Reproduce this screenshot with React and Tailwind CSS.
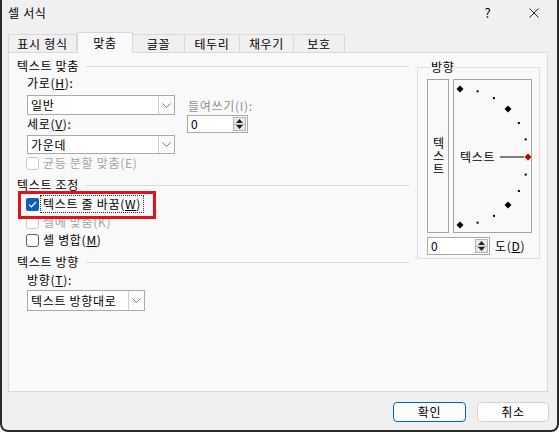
import React from 'react';

const Chevron = () => (
  <svg width="9" height="5" viewBox="0 0 9 5">
    <path d="M0.5 0.5 L4.5 4.5 L8.5 0.5" fill="none" stroke="#7a7a7a" strokeWidth="1" />
  </svg>
);

function Select({ value, className }) {
  return (
    <div className={`flex bg-white border border-[#a9a9a9] ${className}`}>
      <div className="flex-1 pl-[3px] flex items-center leading-[16px] text-black">{value}</div>
      <div className="w-[16px] border-l border-[#cfcfcf] bg-[#fbfbfb] flex items-center justify-center">
        <Chevron />
      </div>
    </div>
  );
}

function SpinBox({ value, className }) {
  return (
    <div className={`flex bg-white border border-[#a9a9a9] ${className}`}>
      <div className="flex-1 pl-[3px] flex items-center leading-[16px]">{value}</div>
      <div className="w-[13px] my-[1px] mr-[1px] flex flex-col border border-[#b4b4b4] bg-[#e9e9e9]">
        <div className="flex-1 flex items-center justify-center border-b border-[#b4b4b4]">
          <svg width="7" height="4" viewBox="0 0 7 4"><path d="M3.5 0 L7 4 L0 4 Z" fill="#222" /></svg>
        </div>
        <div className="flex-1 flex items-center justify-center">
          <svg width="7" height="4" viewBox="0 0 7 4"><path d="M0 0 L7 0 L3.5 4 Z" fill="#222" /></svg>
        </div>
      </div>
    </div>
  );
}

function Checkbox({ checked, disabled }) {
  if (checked) {
    return (
      <div className="w-[13px] h-[13px] rounded-[2px] bg-[#0f5fb8] flex items-center justify-center">
        <svg width="9" height="7" viewBox="0 0 9 7">
          <path d="M1 3.6 L3.4 6 L8 1" fill="none" stroke="#fff" strokeWidth="1.2" />
        </svg>
      </div>
    );
  }
  return (
    <div
      className={`w-[13px] h-[13px] rounded-[3px] bg-white border ${disabled ? 'border-[#cbcbcb]' : 'border-[#5c5c5c]'}`}
    />
  );
}

function GroupHeader({ children, className }) {
  return (
    <div className={`flex items-center h-[16px] ${className}`}>
      <span className="leading-[16px]">{children}</span>
      <div className="flex-1 h-px bg-[#dcdcdc] ml-[7px]" />
    </div>
  );
}

function Tab({ label, active, className }) {
  if (active) {
    return (
      <div className={`relative z-10 h-[21px] flex items-center justify-center bg-[#f9f9f9] border-x border-t border-[#d9d9d9] ${className}`}>
        {label}
      </div>
    );
  }
  return (
    <div className={`mt-[2px] h-[19px] flex items-center justify-center bg-[#f0f0f0] border-t border-r border-[#d9d9d9] ${className}`}>
      {label}
    </div>
  );
}

const angles = [75, 60, 30, 15, -15, -30, -60, -75];

function Dial() {
  const cx = 6;
  const cy = 77;
  const r = 68;
  const diamond = (x, y, s, fill) => (
    <path key={`${x}-${y}`} d={`M${x} ${y - s} L${x + s} ${y} L${x} ${y + s} L${x - s} ${y} Z`} fill={fill} />
  );
  return (
    <svg width="77" height="152" viewBox="0 0 77 152">
      {diamond(cx, cy - r, 3.5, '#000')}
      {diamond(cx + 48, cy - 48, 3.5, '#000')}
      {diamond(cx + 48, cy + 48, 3.5, '#000')}
      {diamond(cx, cy + r, 3.5, '#000')}
      {diamond(cx + r, cy, 3.5, '#c00000')}
      {angles.map((a) => {
        const rad = (a * Math.PI) / 180;
        const x = cx + r * Math.cos(rad);
        const y = cy - r * Math.sin(rad);
        return <rect key={a} x={x - 1} y={y - 1} width="2" height="2" fill="#000" />;
      })}
      <line x1="46" y1={cy} x2="70" y2={cy} stroke="#000" strokeWidth="1" />
      <text x="6" y={cy + 4.5} fontSize="12" letterSpacing="0.7" fontFamily="'Noto Sans CJK KR', sans-serif" fill="#000">
        텍스트
      </text>
    </svg>
  );
}

export default function App() {
  return (
    <div className="w-[559px] h-[432px] bg-[#f0f0f0] border-x-2 border-b-2 border-[#2a2a2a] rounded-b-[8px] flex flex-col text-[12px] tracking-[0.7px] text-black font-['Noto_Sans_CJK_KR',sans-serif] leading-[16px] overflow-hidden">
      {/* Title bar */}
      <div className="h-[26px] flex items-center pl-[6px]">
        <span className="flex-1">셀 서식</span>
        <div className="w-[46px] flex justify-center text-[13px]">?</div>
        <div className="w-[46px] flex justify-center">
          <svg width="10" height="10" viewBox="0 0 10 10">
            <path d="M0.5 0.5 L9.5 9.5 M9.5 0.5 L0.5 9.5" stroke="#222" strokeWidth="1" />
          </svg>
        </div>
      </div>

      {/* Tabs */}
      <div className="mt-[6px] ml-[6px] flex -mb-px">
        <Tab label="표시 형식" className="w-[69px] border-l" />
        <Tab label="맞춤" active className="w-[56px]" />
        <Tab label="글꼴" className="w-[52px]" />
        <Tab label="테두리" className="w-[55px]" />
        <Tab label="채우기" className="w-[54px]" />
        <Tab label="보호" className="w-[51px]" />
      </div>

      {/* Panel */}
      <div className="ml-[6px] w-[540px] h-[340px] bg-[#f9f9f9] border border-[#d9d9d9] flex">
        {/* Left column */}
        <div className="w-[400px] pl-[8px] flex flex-col">
          <GroupHeader className="mt-[5px]">텍스트 맞춤</GroupHeader>
          <div className="pl-[10px] flex flex-col">
            <div className="flex">
              <div className="w-[148px] flex flex-col">
                <div className="mt-[1px] h-[16px]">가로(<u>H</u>):</div>
                <Select value="일반" className="mt-[4px] h-[20px]" />
                <div className="mt-[1px] h-[16px]">세로(<u>V</u>):</div>
                <Select value="가운데" className="mt-[3px] h-[19px]" />
              </div>
              <div className="ml-[12px] flex flex-col">
                <div className="mt-[24px] h-[16px] text-[#8f8f8f] pl-[1px]">들여쓰기(I):</div>
                <SpinBox value="0" className="mt-[1px] h-[18px] w-[61px]" />
              </div>
            </div>
            <div className="mt-[1px] h-[16px] flex items-center gap-[4px] -ml-[1px] text-[#a3a3a3]">
              <Checkbox disabled />
              <span>균등 분할 맞춤(E)</span>
            </div>
          </div>

          <GroupHeader className="mt-[6px]">텍스트 조정</GroupHeader>
          <div className="pl-[10px] flex flex-col">
            <div className="relative mt-[2px] h-[18px] flex items-center -ml-[1px]">
              <Checkbox checked />
              <span className="ml-[1px] px-[2px] border border-dotted border-[#333] leading-[16px]">
                텍스트 줄 바꿈(<u>W</u>)
              </span>
              <div className="absolute -left-[8px] -top-[4px] w-[138px] h-[28px] border-[3px] border-[#e0121c] pointer-events-none" />
            </div>
            <div className="h-[18px] flex items-center gap-[4px] -ml-[1px] text-[#a3a3a3]">
              <Checkbox disabled />
              <span>셀에 맞춤(K)</span>
            </div>
            <div className="h-[18px] flex items-center gap-[4px] -ml-[1px]">
              <Checkbox />
              <span>셀 병합(<u>M</u>)</span>
            </div>
          </div>

          <GroupHeader className="mt-[5px]">텍스트 방향</GroupHeader>
          <div className="pl-[10px] flex flex-col">
            <div className="mt-[2px] h-[16px]">방향(<u>T</u>):</div>
            <Select value="텍스트 방향대로" className="mt-[2px] h-[21px] w-[118px]" />
          </div>
        </div>

        {/* Right column */}
        <fieldset className="ml-[8px] mt-[6px] w-[123px] self-start border border-[#dcdcdc] pl-[9px] pb-[3px]">
          <legend className="ml-[3px] px-[1px] leading-[16px]">방향</legend>
          <div className="mt-[4px] flex gap-[4px]">
            <div className="w-[22px] h-[154px] border border-[#a3a3a3] flex items-center justify-center">
              <span className="[writing-mode:vertical-rl] [text-orientation:upright] tracking-[1px] leading-[14px]">텍스트</span>
            </div>
            <div className="w-[79px] h-[154px] border border-[#a3a3a3]">
              <Dial />
            </div>
          </div>
          <div className="mt-[4px] flex items-center">
            <SpinBox value="0" className="h-[18px] w-[63px]" />
            <span className="ml-[5px]">도(<u>D</u>)</span>
          </div>
        </fieldset>
      </div>

      {/* Buttons */}
      <div className="mt-[10px] flex justify-end gap-[11px] pr-[8px]">
        <button className="w-[73px] h-[20px] rounded-[4px] border border-[#0067c0] bg-[#fdfdfd] flex items-center justify-center">
          확인
        </button>
        <button className="w-[72px] h-[20px] rounded-[4px] border border-[#d0d0d0] bg-[#fdfdfd] flex items-center justify-center">
          취소
        </button>
      </div>
    </div>
  );
}
